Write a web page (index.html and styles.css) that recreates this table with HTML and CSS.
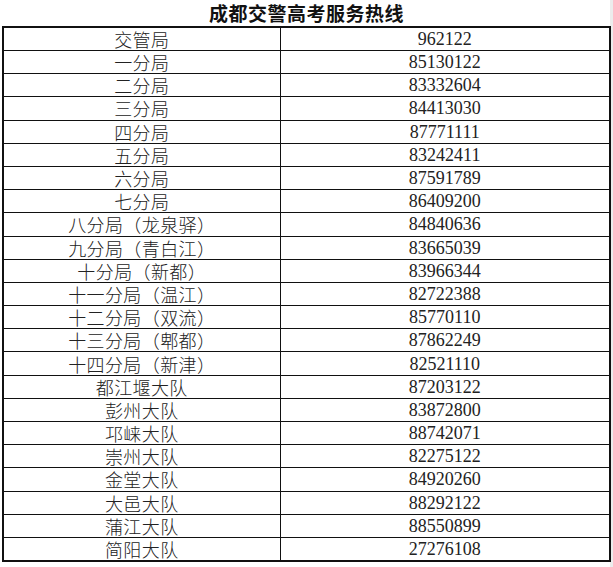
FILE: index.html
```html
<!DOCTYPE html>
<html lang="zh-CN">
<head>
<meta charset="utf-8">
<title>成都交警高考服务热线</title>
<link rel="stylesheet" href="styles.css">
</head>
<body>
<div class="page">
  <h1 class="title">成都交警高考服务热线</h1>
  <table class="hotlines">
    <colgroup><col class="col-name"><col class="col-phone"></colgroup>
    <tbody>
      <tr><td class="name">交管局</td><td class="phone">962122</td></tr>
      <tr><td class="name">一分局</td><td class="phone">85130122</td></tr>
      <tr><td class="name">二分局</td><td class="phone">83332604</td></tr>
      <tr><td class="name">三分局</td><td class="phone">84413030</td></tr>
      <tr><td class="name">四分局</td><td class="phone">87771111</td></tr>
      <tr><td class="name">五分局</td><td class="phone">83242411</td></tr>
      <tr><td class="name">六分局</td><td class="phone">87591789</td></tr>
      <tr><td class="name">七分局</td><td class="phone">86409200</td></tr>
      <tr><td class="name">八分局（龙泉驿）</td><td class="phone">84840636</td></tr>
      <tr><td class="name">九分局（青白江）</td><td class="phone">83665039</td></tr>
      <tr><td class="name">十分局（新都）</td><td class="phone">83966344</td></tr>
      <tr><td class="name">十一分局（温江）</td><td class="phone">82722388</td></tr>
      <tr><td class="name">十二分局（双流）</td><td class="phone">85770110</td></tr>
      <tr><td class="name">十三分局（郫都）</td><td class="phone">87862249</td></tr>
      <tr><td class="name">十四分局（新津）</td><td class="phone">82521110</td></tr>
      <tr><td class="name">都江堰大队</td><td class="phone">87203122</td></tr>
      <tr><td class="name">彭州大队</td><td class="phone">83872800</td></tr>
      <tr><td class="name">邛崃大队</td><td class="phone">88742071</td></tr>
      <tr><td class="name">崇州大队</td><td class="phone">82275122</td></tr>
      <tr><td class="name">金堂大队</td><td class="phone">84920260</td></tr>
      <tr><td class="name">大邑大队</td><td class="phone">88292122</td></tr>
      <tr><td class="name">蒲江大队</td><td class="phone">88550899</td></tr>
      <tr><td class="name">简阳大队</td><td class="phone">27276108</td></tr>
    </tbody>
  </table>
</div>
</body>
</html>
```
FILE: styles.css
```css
html, body {
  margin: 0;
  padding: 0;
  background: #fff;
}

.page {
  width: 613px;
  height: 567px;
  box-sizing: border-box;
  padding-left: 2px;
  background: linear-gradient(to right, #fff 0, #fff 610px, #ececec 610px);
}

.title {
  margin: 0;
  height: 26px;
  line-height: 26px;
  font-family: "Noto Sans CJK SC", sans-serif;
  font-size: 19px;
  font-weight: 700;
  text-align: center;
  letter-spacing: 0.5px;
  color: #111;
  padding-right: 2px;
}

.hotlines {
  border-collapse: collapse;
  width: 607px;
  table-layout: fixed;
  border: 2px solid #111;
}

.col-name { width: 277px; }
.col-phone { width: 330px; }

.hotlines tr {
  height: 23.2px;
}

.hotlines td {
  border: 1px solid #111;
  padding: 0;
  text-align: center;
  vertical-align: middle;
  line-height: 22px;
  color: #222;
}

.hotlines td.name {
  font-family: "Noto Sans CJK SC", sans-serif;
  font-weight: 300;
  font-size: 18px;
  letter-spacing: 0.4px;
}

.hotlines td.phone {
  font-family: "Liberation Serif", serif;
  font-size: 18px;
}
```
